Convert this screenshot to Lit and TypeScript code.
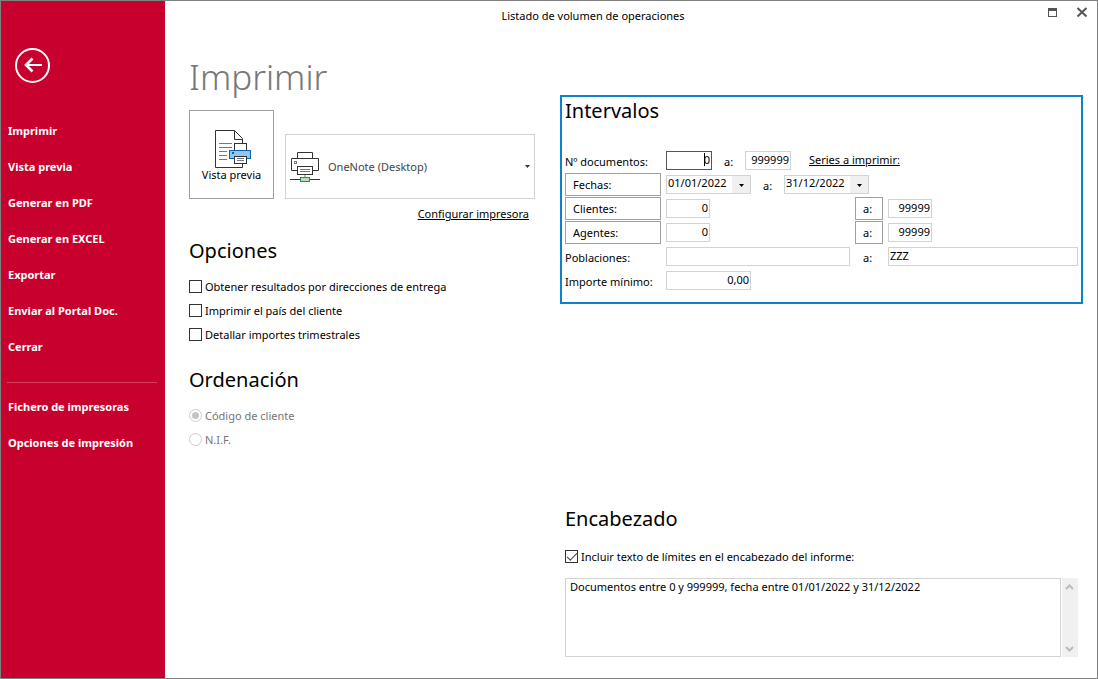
import { LitElement, html, css, svg } from "lit";
import { customElement, state } from "lit/decorators.js";

const caret = svg`<path d="M0 0H5L2.5 3Z" fill="currentColor" />`;

@customElement("side-menu")
class SideMenu extends LitElement {
  static styles = css`
    :host {
      display: block;
      background: #c8002d;
      color: #fff;
    }
    .nav {
      display: flex;
      flex-direction: column;
      padding: 46px 8px 0 6px;
    }
    .back {
      width: 36px;
      height: 36px;
      margin: 0 0 30px 8px;
      padding: 0;
      border: 0;
      background: none;
      color: inherit;
    }
    .back svg {
      display: block;
    }
    .item {
      padding: 0 1px;
      font-size: 11px;
      font-weight: 700;
      line-height: 36px;
      color: inherit;
      text-decoration: none;
    }
    .line {
      width: 100%;
      height: 1px;
      margin: 17px 0 6px;
      border: 0;
      background: #d33f5c;
    }
  `;

  render() {
    const item = (t: string) => html`<a class="item" href="#">${t}</a>`;
    return html`
      <nav class="nav">
        <button class="back" aria-label="Volver">
          <svg width="36" height="36" viewBox="0 0 36 36" fill="none" stroke="#fff">
            <circle cx="17.5" cy="18.5" r="16.5" stroke-width="2" />
            <path d="M10 18H27" stroke-width="2" />
            <path d="M17.5 11.5L11 18L17.5 24.5" stroke-width="2.6" />
          </svg>
        </button>
        ${["Imprimir", "Vista previa", "Generar en PDF", "Generar en EXCEL", "Exportar", "Enviar al Portal Doc.", "Cerrar"].map(item)}
        <hr class="line" />
        ${["Fichero de impresoras", "Opciones de impresión"].map(item)}
      </nav>
    `;
  }
}

@customElement("app-root")
class AppRoot extends LitElement {
  @state() private options = [
    "Obtener resultados por direcciones de entrega",
    "Imprimir el país del cliente",
    "Detallar importes trimestrales",
  ];

  static styles = css`
    :host {
      display: block;
      font-family: "Noto Sans", "Open Sans", sans-serif;
      font-size: 11px;
      line-height: 16px;
      color: #000;
    }
    * {
      box-sizing: border-box;
    }
    button,
    input,
    select,
    textarea {
      margin: 0;
      font: inherit;
      color: inherit;
      border-radius: 0;
    }
    a {
      color: inherit;
    }
    .window {
      display: grid;
      grid-template-columns: 164px minmax(0, 1fr);
      min-height: 100vh;
      border: 1px solid #808080;
      background: #fff;
    }
    .main {
      display: flex;
      flex-direction: column;
    }
    .titlebar {
      display: flex;
      height: 30px;
    }
    .title {
      flex: 1;
      text-align: center;
      line-height: 30px;
    }
    .controls {
      display: flex;
      justify-content: flex-end;
      gap: 17px;
      width: 76px;
      padding: 6px 9px 0 0;
    }
    .control {
      width: 12px;
      height: 12px;
      padding: 0;
      border: 0;
      background: none;
    }
    .control svg {
      display: block;
    }
    .content {
      flex: 1;
      display: grid;
      grid-template-columns: minmax(0, 346fr) minmax(0, 523fr);
      gap: 25px;
      padding: 0 14px 21px 24px;
    }
    .column {
      display: flex;
      flex-direction: column;
    }
    .heading {
      margin: 0;
      font-size: 35px;
      font-weight: 300;
      line-height: 48px;
      padding: 22px 0 9px;
      color: #777;
    }
    .sub {
      margin: 0;
      font-size: 20px;
      font-weight: 400;
      line-height: 28px;
    }
    .printer {
      display: flex;
      align-items: flex-end;
      gap: 11px;
    }
    .preview {
      display: flex;
      flex-direction: column;
      align-items: center;
      width: 85px;
      height: 89px;
      padding: 19px 0 0;
      border: 1px solid #a0a0a0;
      background: #fff;
      line-height: 14px;
    }
    .preview svg {
      margin-left: 2px;
    }
    .combo {
      flex: 1;
      display: flex;
      align-items: center;
      height: 65px;
      padding: 0 4px;
      border: 1px solid #d3d3d3;
    }
    .combo select {
      flex: 1;
      min-width: 0;
      height: 63px;
      padding: 0 8px;
      border: 0;
      appearance: none;
      background: none;
      color: #444;
    }
    .configure {
      align-self: flex-end;
      margin: 7px 6px 0 0;
    }
    .options {
      margin-top: 15px;
    }
    .order {
      margin-top: 23px;
    }
    .list {
      display: flex;
      flex-direction: column;
      gap: 8px;
      padding-top: 14px;
    }
    .check {
      display: flex;
      align-items: flex-start;
      gap: 3px;
    }
    .check.disabled {
      color: #767676;
    }
    .box,
    .radio {
      appearance: none;
      display: grid;
      place-items: center;
      width: 13px;
      height: 13px;
      margin-top: 1px;
      border: 1px solid #333;
      background: #fff;
    }
    .box:checked::after {
      content: "";
      width: 9px;
      height: 4px;
      margin-top: -3px;
      border: solid #444;
      border-width: 0 0 1px 1px;
      transform: rotate(-45deg);
    }
    .radio {
      border-color: #ccc;
      border-radius: 50%;
    }
    .radio:checked::after {
      content: "";
      width: 7px;
      height: 7px;
      border-radius: 50%;
      background: #c4c4c4;
    }
    .ranges {
      margin-top: 64px;
      padding: 0 3px 10px;
      border: 2px solid #0a82cc;
    }
    .rows {
      display: flex;
      flex-direction: column;
      padding-top: 23px;
    }
    .row {
      display: grid;
      grid-template-columns: 96px minmax(0, 184fr) 28px minmax(0, 190fr);
      column-gap: 5px;
      align-items: center;
      height: 24px;
    }
    .row.wide {
      grid-template-columns: 96px minmax(0, 1fr);
    }
    .label {
      padding-top: 3px;
    }
    .mid {
      padding: 3px 0 0 8px;
    }
    .line {
      display: flex;
      align-items: center;
    }
    .field {
      height: 19px;
      padding: 0 1px 2px;
      border: 1px solid #d3d3d3;
      background: #fff;
    }
    .number {
      text-align: right;
    }
    .doc {
      width: 46px;
    }
    .code {
      width: 44px;
    }
    .amount {
      width: 85px;
    }
    .full {
      width: 100%;
    }
    .editing {
      border-color: #555;
      outline: 0;
      background: linear-gradient(#000, #000) no-repeat right 6px top 1px / 1px 13px;
    }
    .between {
      width: 33px;
      padding: 3px 0 0 12px;
    }
    .series {
      margin-left: 18px;
    }
    .date {
      display: flex;
      width: 85px;
      height: 19px;
      border: 1px solid #d3d3d3;
    }
    .date input {
      flex: 1;
      min-width: 0;
      padding: 0 0 2px 1px;
      border: 0;
      background: none;
    }
    .date button {
      display: grid;
      place-items: center;
      width: 18px;
      padding: 2px 0 0;
      border: 0;
      background: #f0f0f0;
    }
    .push {
      height: 23px;
      padding: 1px 7px 0;
      border: 1px solid #a0a0a0;
      background: #fff;
      text-align: left;
    }
    .header {
      margin-top: auto;
      padding: 0 5px;
    }
    .header .list {
      padding-top: 16px;
    }
    .note {
      display: flex;
      gap: 1px;
      margin-top: 13px;
    }
    .note textarea {
      flex: 1;
      height: 79px;
      padding: 0 4px;
      border: 1px solid #d3d3d3;
      resize: none;
      overflow: hidden;
    }
    .scroll {
      display: flex;
      flex-direction: column;
      justify-content: space-between;
      width: 16px;
      padding: 5px 3px 4px;
      background: #f0f0f0;
    }
  `;

  private checkbox(text: string, checked = false) {
    return html`<label class="check"><input class="box" type="checkbox" .checked=${checked} />${text}</label>`;
  }

  private radio(text: string, checked = false) {
    return html`<label class="check disabled"
      ><input class="radio" type="radio" name="order" disabled .checked=${checked} />${text}</label
    >`;
  }

  private date(value: string, name: string) {
    return html`<div class="date">
      <input type="text" aria-label=${name} .value=${value} />
      <button aria-label="Abrir calendario"><svg width="5" height="3">${caret}</svg></button>
    </div>`;
  }

  private codeRow(name: string) {
    return html`<div class="row">
      <button class="push">${name}:</button>
      <input class="field number code" type="text" aria-label="${name} desde" .value=${"0"} />
      <button class="push">a:</button>
      <input class="field number code" type="text" aria-label="${name} hasta" .value=${"99999"} />
    </div>`;
  }

  render() {
    return html`
      <div class="window">
        <side-menu></side-menu>
        <main class="main">
          <header class="titlebar">
            <div class="title">Listado de volumen de operaciones</div>
            <div class="controls">
              <button class="control" aria-label="Maximizar">
                <svg width="12" height="12" shape-rendering="crispEdges">
                  <rect x="1.5" y="1.5" width="8" height="8" fill="none" stroke="#555" />
                  <rect x="1" y="1" width="9" height="3" fill="#555" />
                </svg>
              </button>
              <button class="control" aria-label="Cerrar">
                <svg width="12" height="12"><path d="M1.5 1L10.5 9.5M10.5 1L1.5 9.5" stroke="#555" stroke-width="2" /></svg>
              </button>
            </div>
          </header>
          <div class="content">
            <section class="column">
              <h1 class="heading">Imprimir</h1>
              <div class="printer">
                <button class="preview">
                  <svg width="36" height="38" viewBox="0 0 36 38" fill="none" stroke="#333">
                    <path d="M27.5 34V37.5H.5V.5H19.5L27.5 8.5V13M19.5 .5V9.5H27.5" />
                    <path d="M4 13.5H17M4 17.5H17M4 21.5H12M4 25.5H12M4 29.5H12" stroke="#777" />
                    <rect x="19.5" y="13.5" width="12" height="8" fill="#fff" />
                    <rect x="14.5" y="20.5" width="21" height="8" fill="#91c6ee" stroke="#0a64b0" />
                    <rect x="17" y="22" width="2" height="2" fill="#0a64b0" stroke="none" />
                    <rect x="19.5" y="26.5" width="12" height="7" fill="#fff" />
                    <path d="M22 28.5H29M22 30.5H29" stroke="#777" />
                  </svg>
                  Vista previa
                </button>
                <div class="combo">
                  <svg width="30" height="30" viewBox="0 0 30 30" fill="none" stroke="#333">
                    <path d="M7.5 6V.5H22.5V6" />
                    <path d="M7 18.5H1.5V6.5H28.5V18.5H23" />
                    <rect x="4.5" y="9.5" width="2" height="2" stroke="#777" />
                    <rect x="7.5" y="14.5" width="15" height="8" />
                    <path d="M10 17.5H20M10 19.5H20" stroke="#777" />
                    <path d="M15 23V25" stroke="#bbb" stroke-width="2" />
                    <path d="M0 27.5H10M20 27.5H30" />
                    <rect x="10.5" y="25.5" width="9" height="4" fill="#b5dfbd" stroke="#149a40" />
                  </svg>
                  <select aria-label="Impresora">
                    <option>OneNote (Desktop)</option>
                  </select>
                  <svg width="5" height="3" color="#333">${caret}</svg>
                </div>
              </div>
              <a class="configure" href="#">Configurar impresora</a>

              <h2 class="sub options">Opciones</h2>
              <div class="list">${this.options.map((o) => this.checkbox(o))}</div>
              <h2 class="sub order">Ordenación</h2>
              <div class="list">${this.radio("Código de cliente", true)}${this.radio("N.I.F.")}</div>
            </section>

            <section class="column">
              <div class="ranges">
                <h2 class="sub">Intervalos</h2>
                <div class="rows">
                  <div class="row wide">
                    <label class="label" for="doc-from">Nº documentos:</label>
                    <div class="line">
                      <input id="doc-from" class="field number doc editing" type="text" .value=${"0"} />
                      <label class="between" for="doc-to">a:</label>
                      <input id="doc-to" class="field number doc" type="text" .value=${"999999"} />
                      <a class="series" href="#">Series a imprimir:</a>
                    </div>
                  </div>
                  <div class="row wide">
                    <button class="push">Fechas:</button>
                    <div class="line">
                      ${this.date("01/01/2022", "Fecha desde")}
                      <span class="between">a:</span>
                      ${this.date("31/12/2022", "Fecha hasta")}
                    </div>
                  </div>
                  ${this.codeRow("Clientes")} ${this.codeRow("Agentes")}
                  <div class="row">
                    <label class="label" for="town-from">Poblaciones:</label>
                    <input id="town-from" class="field full" type="text" />
                    <label class="mid" for="town-to">a:</label>
                    <input id="town-to" class="field full" type="text" .value=${"ZZZ"} />
                  </div>
                  <div class="row wide">
                    <label class="label" for="minimum">Importe mínimo:</label>
                    <input id="minimum" class="field number amount" type="text" .value=${"0,00"} />
                  </div>
                </div>
              </div>

              <div class="header">
                <h2 class="sub">Encabezado</h2>
                <div class="list">${this.checkbox("Incluir texto de límites en el encabezado del informe:", true)}</div>
                <div class="note">
                  <textarea aria-label="Texto del encabezado" .value=${"Documentos entre 0 y 999999, fecha entre 01/01/2022 y 31/12/2022"}></textarea>
                  <div class="scroll" aria-hidden="true">
                    <svg width="9" height="8" fill="none" stroke="#bbb" stroke-width="2"><path d="M1 6L4.5 2.5L8 6" /></svg>
                    <svg width="9" height="8" fill="none" stroke="#bbb" stroke-width="2"><path d="M1 2L4.5 5.5L8 2" /></svg>
                  </div>
                </div>
              </div>
            </section>
          </div>
        </main>
      </div>
    `;
  }
}
